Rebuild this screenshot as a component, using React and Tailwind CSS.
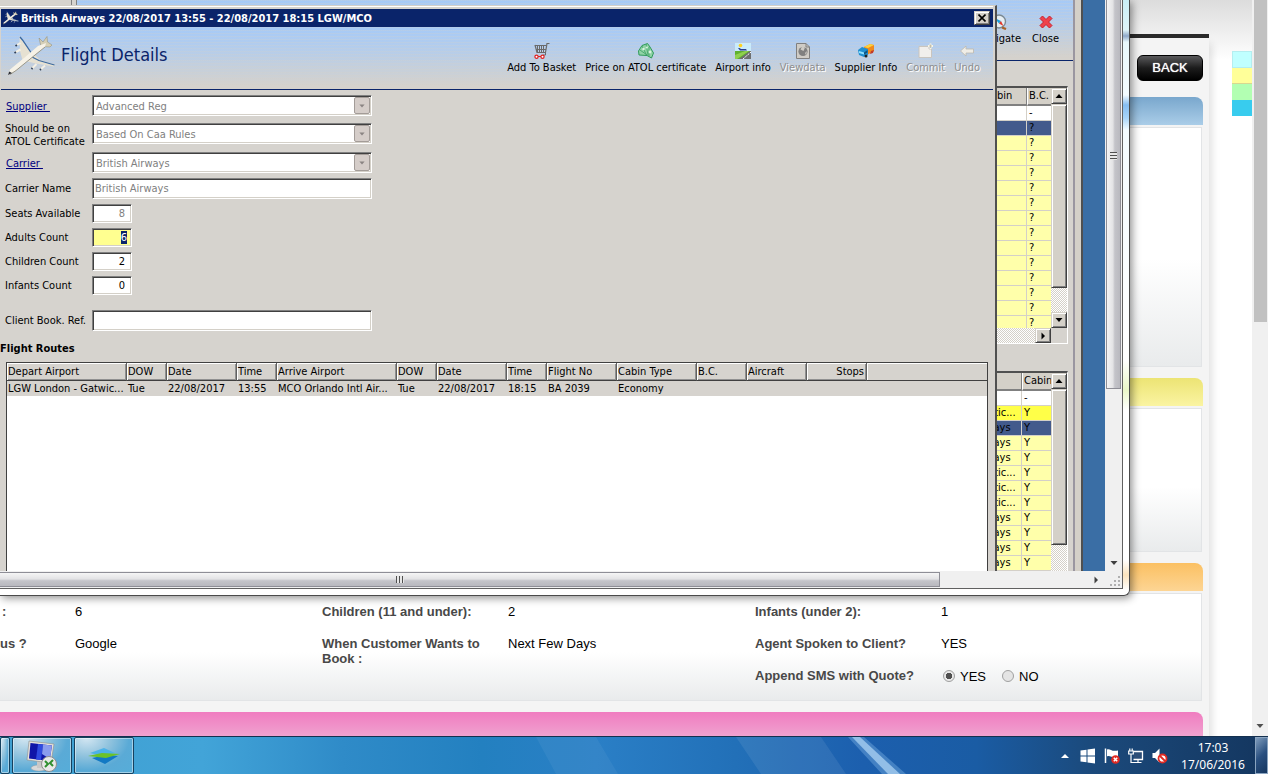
import React, { useState } from 'react';

const BEVEL_IN =
  "border border-t-[#808080] border-l-[#808080] border-r-white border-b-white shadow-[inset_1px_1px_0_#404040,inset_-1px_-1px_0_#d4d0c8]";
const BEVEL_OUT =
  "border border-t-[#d4d0c8] border-l-[#d4d0c8] border-r-[#404040] border-b-[#404040] shadow-[inset_1px_1px_0_#ffffff,inset_-1px_-1px_0_#808080]";
const DITHER = "bg-[repeating-conic-gradient(#ffffff_0_25%,#d4d0c8_0_50%)] bg-[length:2px_2px]";
const SKY =
  "bg-[repeating-linear-gradient(180deg,rgba(212,208,200,0.25)_0_1px,transparent_1px_3px),linear-gradient(180deg,#a6caf7_0%,#b4cdec_35%,#d5d2cd_95%)]";

const PlaneIcon = ({ className }) => (
  <svg viewBox="0 0 48 40" className={className}>
    {/* wings */}
    <path d="M11.500 0.500 L14 4 L24 18 L15 26 L12 15 Z" fill="#e6e1d2" />
    <path d="M12 1 L14.500 4 L24 18" fill="none" stroke="#3c6aa0" strokeWidth="1.300" />
    <path d="M26 18 L32 24 L46.500 28.500 L46 30.500 L28 27.500 L17 25 Z" fill="#e6e1d2" />
    <path d="M24 21 L31 24.500 L46.500 29" fill="none" stroke="#3c6aa0" strokeWidth="1.300" />
    {/* engines */}
    <path d="M8 9.500 L12.500 7 M7 16.500 L12.500 13.500 M24 32.500 L28.500 28 M32.500 33.500 L37 29.500" stroke="#f4f0e4" strokeWidth="2" />
    <path d="M7.500 10 L9 9 M6.500 17 L8 16 M23.500 33 L24.500 32 M32 34 L33 33" stroke="#2d3e58" strokeWidth="1.800" />
    {/* tail */}
    <path d="M31 2 L35 6 L39 0.500 L39.500 6 L44 9 L42 11 L33 10.500 Z" fill="#d5cfb6" stroke="#8d8872" strokeWidth="0.500" />
    {/* fuselage */}
    <path d="M0 39 L2 33.500 L16 22 L30 10 L38 7 L37 11 L27 19 L8 34.500 Z" fill="#f6f2e7" />
    <path d="M2 38.500 L8 34.500 L27 19 L37 11" fill="none" stroke="#9a9788" strokeWidth="1" />
    <path d="M0 39 L1.200 35.500 L4 37 Z" fill="#2c2e36" />
  </svg>
);

const BasketIcon = () => (
  <svg viewBox="0 0 16 16" className="size-4">
    <path d="M0.500 2.500 H12 M1 2 L3 9.500 H11.500 L13 0.500 H15.500 M2 6.500 H12" fill="none" stroke="#6a6a6a" strokeWidth="1.2" />
    <path d="M3.500 3 V9 M5.500 3 V9 M7.500 3 V9 M9.500 3 V9 M11.500 9 V12 H9" fill="none" stroke="#6a6a6a" />
    <circle cx="2.500" cy="13.800" r="1.600" fill="#fff" stroke="#e02020" strokeWidth="1.200" />
    <circle cx="8.500" cy="13.800" r="1.600" fill="#fff" stroke="#e02020" strokeWidth="1.200" />
    <path d="M4 13.500 H7" stroke="#e02020" />
  </svg>
);

const MoneyIcon = () => (
  <svg viewBox="0 0 16 16" className="size-4">
    <path d="M0.500 8 L4 2.500 L9.500 0.500 L12 4 L15.500 10 L13.500 15 L9 12.500 L1 12 Z" fill="#8fd3a6" stroke="#2f9a5a" />
    <path d="M4 3 L8.500 12 M8 1 L10 12 M2 7 L9 12 M11 4 L11 13" stroke="#3b9f63" strokeWidth="0.8" />
    <circle cx="5.500" cy="6" r="1.200" fill="#d8f3df" />
    <circle cx="12" cy="9" r="1.400" fill="#d8f3df" />
    <circle cx="8.800" cy="4.500" r="1.100" fill="#d8f3df" />
  </svg>
);

const AirportIcon = () => (
  <svg viewBox="0 0 16 16" className="size-4">
    <rect width="16" height="9" fill="#c9ebfb" />
    <rect y="8" width="16" height="8" fill="#5fb02f" />
    <path d="M4 16 L15 8 H16 V16 Z" fill="#6d6f70" />
    <path d="M0 12 L10 8 H14 L2 16 H0 Z" fill="#8fd04f" />
    <path d="M8 16 L16 9" stroke="#fff" strokeDasharray="2 1" />
    <circle cx="5.500" cy="2.500" r="1.800" fill="#ffd21f" />
    <path d="M3 5 L5 7.500 H12 L11 6 H6 L4.500 5 Z" fill="#2a3f8f" />
  </svg>
);

const ViewdataIcon = () => (
  <svg viewBox="0 0 16 16" className="size-4">
    <path d="M1.500 0.500 H11 L14.500 4 V15.500 H1.500 Z" fill="#cfccc6" stroke="#808080" />
    <path d="M11 0.500 V4 H14.500" fill="none" stroke="#808080" />
    <circle cx="8" cy="8.500" r="4.600" fill="#808080" />
    <path d="M7 3.500 L10 4.500 L8.500 8 L5.500 6.500 Z M10 10 L12 8 L11 12 Z" fill="#cfccc6" />
  </svg>
);

const TruckIcon = () => (
  <svg viewBox="0 0 16 16" className="size-4">
    <path d="M6 4 L12 1 L16 2 V8 L9 12 L6 8 Z" fill="#f08a1d" />
    <path d="M6 4 L12 1 L16 2 L10 5 Z" fill="#ffd23a" />
    <path d="M13 8 L16 7 L15 10 L12 11 Z" fill="#c0392b" />
    <path d="M0 7 L4 4 L10 6 V12 L6 14 L1 12 Z" fill="#1f8fd0" />
    <path d="M1 8 L6 9.500 V11.500 L1 10 Z" fill="#8ee0ff" />
    <path d="M6 9.500 L9.500 7 V9.500 L6 11.500 Z" fill="#12537f" />
    <circle cx="8" cy="13" r="1.500" fill="#222" />
  </svg>
);

const CommitIcon = () => (
  <svg viewBox="0 0 16 16" className="size-4">
    <path d="M1 3.500 H11 V6 H13.500 V14.500 H1 Z" fill="#f1efec" stroke="#c9c5bf" />
    <path d="M12.500 0.500 V6 M10 3 H15" stroke="#f7f5e8" strokeWidth="1.800" />
    <path d="M12.500 1.500 V5 M11 3 H14" stroke="#b5b19e" strokeWidth="0.700" />
  </svg>
);

const UndoIcon = () => (
  <svg viewBox="0 0 16 16" className="size-4">
    <path d="M1.500 8 L7 3 V6 H14.500 V10 H7 V13 Z" fill="#efede6" stroke="#bdb9af" strokeWidth="0.800" />
  </svg>
);

const CompassIcon = () => (
  <svg viewBox="0 0 16 16" className="size-4">
    <circle cx="8" cy="7.500" r="6.500" fill="#e6eef3" stroke="#7b8a94" strokeWidth="1.400" />
    <path d="M3.500 4 L10 7 L8 9.500 Z" fill="#1aa0dd" />
    <path d="M10 7 L12.500 12 L8 9.500 Z" fill="#e0382b" />
    <path d="M11 13.500 L15 15" stroke="#a8632a" strokeWidth="2.400" />
  </svg>
);

const CloseIcon = () => (
  <svg viewBox="0 0 16 16" className="size-4">
    <path d="M2 4.500 L4.500 2 L8 5.500 L11.500 2 L14 4.500 L10.500 8 L14 11.500 L11.500 14 L8 10.500 L4.500 14 L2 11.500 L5.500 8 Z" fill="#f0424c" stroke="#c81f2c" strokeLinejoin="round" />
  </svg>
);

const Arrow = ({ dir, className = "fill-black" }) => (
  <svg viewBox="0 0 8 8" className={`size-2 ${className}`}>
    {dir === "up" && <path d="M0.500 6 L4 2 L7.500 6 Z" />}
    {dir === "down" && <path d="M0.500 2 L4 6 L7.500 2 Z" />}
    {dir === "right" && <path d="M2.500 0.500 L6 4 L2.500 7.500 Z" />}
  </svg>
);

const toolbarItems = [
  { label: "Add To Basket", icon: BasketIcon },
  { label: "Price on ATOL certificate", icon: MoneyIcon },
  { label: "Airport info", icon: AirportIcon },
  { label: "Viewdata", icon: ViewdataIcon, disabled: true },
  { label: "Supplier Info", icon: TruckIcon },
  { label: "Commit", icon: CommitIcon, disabled: true },
  { label: "Undo", icon: UndoIcon, disabled: true },
];

const routeColumns = [
  { title: "Depart Airport", width: "w-[120px]", value: "LGW London - Gatwic..." },
  { title: "DOW", width: "w-[40px]", value: "Tue" },
  { title: "Date", width: "w-[70px]", value: "22/08/2017" },
  { title: "Time", width: "w-[40px]", value: "13:55" },
  { title: "Arrive Airport", width: "w-[120px]", value: "MCO Orlando Intl Air..." },
  { title: "DOW", width: "w-[40px]", value: "Tue" },
  { title: "Date", width: "w-[70px]", value: "22/08/2017" },
  { title: "Time", width: "w-[40px]", value: "18:15" },
  { title: "Flight No", width: "w-[70px]", value: "BA 2039" },
  { title: "Cabin Type", width: "w-[80px]", value: "Economy" },
  { title: "B.C.", width: "w-[50px]", value: "" },
  { title: "Aircraft", width: "w-[60px]", value: "" },
  { title: "Stops", width: "w-[60px]", value: "", right: true },
  { title: "", width: "", value: "" },
];

const fareRows = [
  { left: "", right: "-", tone: "bg-white" },
  { left: "", right: "?", tone: "bg-[#435a8c]" },
  ...Array.from({ length: 13 }, () => ({ left: "", right: "?", tone: "bg-[#ffffaa]" })),
];

const carrierRows = [
  { left: "", right: "-", tone: "bg-white" },
  { left: "Virgin Atlantic...", right: "Y", tone: "bg-[#ffff48]" },
  { left: "British Airways", right: "Y", tone: "bg-[#435a8c]" },
  { left: "British Airways", right: "Y", tone: "bg-[#ffffaa]" },
  { left: "British Airways", right: "Y", tone: "bg-[#ffffaa]" },
  { left: "Virgin Atlantic...", right: "Y", tone: "bg-[#ffffaa]" },
  { left: "Virgin Atlantic...", right: "Y", tone: "bg-[#ffffaa]" },
  { left: "Virgin Atlantic...", right: "Y", tone: "bg-[#ffffaa]" },
  { left: "British Airways", right: "Y", tone: "bg-[#ffffaa]" },
  { left: "British Airways", right: "Y", tone: "bg-[#ffffaa]" },
  { left: "British Airways", right: "Y", tone: "bg-[#ffffaa]" },
  { left: "British Airways", right: "Y", tone: "bg-[#ffffaa]" },
];

const ToolButton = ({ label, icon: Icon, disabled }) => (
  <button
    disabled={disabled}
    className={`flex flex-col items-center gap-px whitespace-nowrap leading-4 ${
      disabled ? "text-[#8e8e8e] [text-shadow:1px_1px_0_#ffffff]" : "text-black"
    }`}
  >
    <Icon />
    {label}
  </button>
);

const GridTable = ({ headers, rows, width, firstCol, secondCol }) => (
  <table className={`table-fixed border-separate border-spacing-0 ${width}`}>
    <colgroup>
      <col className={firstCol} />
      <col className={secondCol} />
    </colgroup>
    <thead>
      <tr className="h-[18px] bg-[#d4d0c8] text-left">
        {headers.map((h, i) => (
          <th key={i} className="overflow-hidden whitespace-nowrap border-b-2 border-l border-r border-b-[#808080] border-l-white border-r-[#808080] p-0 pl-px font-normal leading-4 last:border-r-0">
            {h}
          </th>
        ))}
      </tr>
    </thead>
    <tbody>
      {rows.map((row, i) => (
        <tr key={i} className={`h-[15px] ${row.tone}`}>
          <td className="overflow-hidden whitespace-nowrap border-b border-r border-[#d4d0c8] p-0 leading-[14px]">{row.left}</td>
          <td className="overflow-hidden whitespace-nowrap border-b border-[#d4d0c8] p-0 pl-0.5 leading-[14px]">{row.right}</td>
        </tr>
      ))}
    </tbody>
  </table>
);

const TextField = ({ id, label, value, onChange, small, disabled, className = "" }) => (
  <div className={`flex items-center ${small ? "h-[19px]" : "h-[21px]"} ${className}`}>
    <label htmlFor={id} className="w-[87px] shrink-0 whitespace-nowrap pt-0.5">{label}</label>
    <input
      id={id}
      value={value}
      disabled={disabled}
      onChange={(e) => onChange && onChange(e.target.value)}
      readOnly={!onChange}
      className={`h-full bg-white outline-none ${BEVEL_IN} ${small ? "w-10 pr-1.5 text-right" : "w-[280px] px-0.5"} ${
        disabled ? "text-[#808080]" : "text-black"
      }`}
    />
  </div>
);

const SelectField = ({ id, label, value, link, className = "" }) => (
  <div className={`flex h-[21px] items-center ${className}`}>
    <label htmlFor={id} className="w-[87px] shrink-0 whitespace-pre pt-0.5 leading-[13px]">
      {link ? <a href="#" className="pl-px text-[#000080] underline">{label}</a> : label}
    </label>
    <div className={`flex h-full w-[280px] items-stretch bg-white p-px ${BEVEL_IN}`}>
      <select id={id} disabled className="flex-1 appearance-none bg-transparent pl-0.5 pt-0.5 text-[#808080] opacity-100">
        <option>{value}</option>
      </select>
      <span className="flex w-4 items-center justify-center rounded-[2px] border border-[#a39c98] bg-[#d5cdc9]">
        <Arrow dir="down" className="scale-75 fill-[#8a8482]" />
      </span>
    </div>
  </div>
);

const FlightDetails = () => {
  const [children, setChildren] = useState("2");
  const [infants, setInfants] = useState("0");
  const [bookRef, setBookRef] = useState("");

  return (
    <section className="absolute bottom-0 left-0 right-[108px] top-[5px] flex flex-col border-r-2 border-t border-r-[#505050] border-t-[#d4d0c8] bg-[#d6d3ce] pr-[2px] text-black">
      {/* Title bar */}
      <div className="h-[3px] shrink-0 border-t border-white" />
      <header className="ml-px flex h-[18px] shrink-0 items-center bg-[#0a246a] pl-0.5 pr-[3px] text-white">
        <PlaneIcon className="size-4" />
        <h1 className="flex-1 pl-0.5 pt-0.5 text-[11px] font-bold">British Airways 22/08/2017 13:55 - 22/08/2017 18:15 LGW/MCO</h1>
        <button aria-label="Close window" className={`flex h-3.5 w-4 items-center justify-center bg-[#d4d0c8] ${BEVEL_OUT}`}>
          <svg viewBox="0 0 8 8" className="size-2 stroke-black stroke-[1.6]">
            <path d="M0.500 0.500 L7.500 7.500 M7.500 0.500 L0.500 7.500" />
          </svg>
        </button>
      </header>

      {/* Toolbar */}
      <div className={`ml-px flex h-[63px] shrink-0 items-start border-b border-[#0a246a] pr-[13px] ${SKY}`}>
        <PlaneIcon className="ml-[7px] mt-[9px] h-10 w-12" />
        <h2 className="flex-1 pl-[5px] pt-4 text-[18px] leading-6 text-[#0a246a]">Flight Details</h2>
        <nav className="flex gap-[9px] pt-4">
          {toolbarItems.map((item) => (
            <ToolButton key={item.label} {...item} />
          ))}
        </nav>
      </div>

      {/* Form */}
      <form className="flex shrink-0 flex-col gap-[5px] pl-[5px] pt-[5px]">
        <SelectField id="supplier" label="Supplier " value="Advanced Reg" link />
        <SelectField id="atol" label={"Should be on\nATOL Certificate"} value="Based On Caa Rules" className="mt-0.5" />
        <SelectField id="carrier" label="Carrier " value="British Airways" link className="mt-[3px]" />
        <TextField id="carrierName" label="Carrier Name" value="British Airways" disabled />
        <TextField id="seats" label="Seats Available" value="8" small disabled />
        {/* the focused count is shown with its digit selected */}
        <div className="flex h-[19px] items-center">
          <label htmlFor="adults" className="w-[87px] shrink-0 pt-0.5">Adults Count</label>
          <input
            id="adults"
            defaultValue="6"
            autoFocus
            onFocus={(e) => e.target.select()}
            className={`h-full w-10 bg-[#ffff90] pr-1 text-right outline-none selection:bg-[#0a246a] selection:text-white ${BEVEL_IN}`}
          />
        </div>
        <TextField id="children" label="Children Count" value={children} onChange={setChildren} small />
        <TextField id="infants" label="Infants Count" value={infants} onChange={setInfants} small />
        <TextField id="bookRef" label="Client Book. Ref." value={bookRef} onChange={setBookRef} className="mt-[10px]" />
      </form>

      {/* Routes */}
      <h3 className="mt-[10px] shrink-0 font-bold leading-4">Flight Routes</h3>
      <div className="ml-1.5 mr-[5px] mt-[5px] min-h-0 flex-1 border-x border-t border-[#404040] bg-white">
        <table className="w-full table-fixed border-separate border-spacing-0">
          <colgroup>
            {routeColumns.map((c, i) => (
              <col key={i} className={c.width} />
            ))}
          </colgroup>
          <thead>
            <tr className="h-[18px] bg-[#d6d3ce]">
              {routeColumns.map((c, i) => (
                <th
                  key={i}
                  className={`whitespace-nowrap border-b border-r border-b-[#404040] border-r-[#606060] p-0 px-px font-normal leading-4 shadow-[inset_1px_1px_0_#ffffff,inset_-1px_-1px_0_#909090] last:border-r-0 last:shadow-[inset_1px_1px_0_#ffffff] ${
                    c.right ? "pr-0.5 text-right" : "text-left"
                  }`}
                >
                  {c.title}
                </th>
              ))}
            </tr>
          </thead>
          <tbody>
            <tr className="h-[15px] bg-[#d6d3ce]">
              {routeColumns.map((c, i) => (
                <td key={i} className="whitespace-nowrap p-0 pl-px leading-[15px]">{c.value}</td>
              ))}
            </tr>
          </tbody>
        </table>
      </div>
    </section>
  );
};

const BackOffice = () => (
  <div className="flex min-w-0 flex-1 bg-[#d6d3ce] text-black">
    <div className="flex min-w-0 flex-1 flex-col">
      <div className="flex h-[61px] shrink-0">
        <div className="w-[72px] border-r border-[#808080]" />
        <div className="w-[5px] border-r border-[#808080]" />
        <div className={`flex flex-1 items-start justify-end gap-[11px] border-b border-[#0a246a] pr-[14px] pt-3.5 ${SKY}`}>
          <ToolButton label="Navigate" icon={CompassIcon} />
          <ToolButton label="Close" icon={CloseIcon} />
        </div>
      </div>

      {/* Fares */}
      <div className="mr-[5px] mt-[25px] flex h-[258px] shrink-0 border-b border-r border-t-2 border-b-white border-r-white border-t-[#505050]">
        <div className="flex min-w-0 flex-1 flex-col bg-white">
          <div className="flex h-[240px] justify-end overflow-hidden">
            <GridTable headers={["Cabin", "B.C."]} rows={fareRows} width="w-[69px]" firstCol="w-[45px]" secondCol="w-[24px]" />
          </div>
          <div className={`flex flex-1 justify-end ${DITHER}`}>
            <button aria-label="Scroll right" className={`flex w-4 items-center justify-center bg-[#d4d0c8] ${BEVEL_OUT}`}><Arrow dir="right" /></button>
          </div>
        </div>
        <div className="flex w-4 flex-col">
          <button aria-label="Scroll up" className={`flex h-4 items-center justify-center bg-[#d4d0c8] ${BEVEL_OUT}`}><Arrow dir="up" /></button>
          <div className={`h-[184px] bg-[#d4d0c8] ${BEVEL_OUT}`} />
          <div className={`h-[24px] ${DITHER}`} />
          <button aria-label="Scroll down" className={`flex h-4 items-center justify-center bg-[#d4d0c8] ${BEVEL_OUT}`}><Arrow dir="down" /></button>
        </div>
      </div>

      {/* Carriers */}
      <div className="mr-[5px] mt-[27px] flex min-h-0 flex-1 border-r border-t-2 border-r-white border-t-[#505050]">
        <div className="flex min-w-0 flex-1 justify-end overflow-hidden bg-white">
          <GridTable headers={["", "Cabin"]} rows={carrierRows} width="w-[114px]" firstCol="w-[85px]" secondCol="w-[29px]" />
        </div>
        <div className="flex w-4 flex-col">
          <button aria-label="Scroll up" className={`flex h-4 items-center justify-center bg-[#d4d0c8] ${BEVEL_OUT}`}><Arrow dir="up" /></button>
          <div className={`h-[156px] bg-[#d4d0c8] ${BEVEL_OUT}`} />
          <div className={`flex-1 ${DITHER}`} />
        </div>
      </div>
    </div>
    <div className="w-2.5 border-l-2 border-r-2 border-l-[#9a96a0] border-r-[#505050] bg-[#d4d0c8]" />
  </div>
);

const RemoteWindow = () => (
  <div className="absolute bottom-[140px] left-0 right-[138px] top-0 flex rounded-br-md border-b border-r border-[#4a4a4a] bg-[linear-gradient(180deg,#c9eef6_0,#dff4f8_30px,#8fa8c8_36px,#e8f8fb_42px,#f4fcff_95px,#86bdf0_105px,#a8d4f8_118px,#f4fcff_130px,#ffffff_360px,#eaf7c8_390px,#ffffff_410px,#ffffff_560px,#fbe3bd_575px,#ffffff_590px)] pb-1.5 pr-1.5 shadow-[2px_2px_8px_rgba(0,0,0,0.45)]">
    <div className="flex min-w-0 flex-1 flex-col border-b border-r border-[#606060] bg-[#f0f0f0] font-['DejaVu_Sans_Condensed','Liberation_Sans',sans-serif] text-[11px]">
      <div className="flex min-h-0 flex-1">
        <div className="relative flex min-w-0 flex-1 overflow-hidden">
          <BackOffice />
          <div className="w-[22px] bg-[#3a6ea5]" />
          <FlightDetails />
        </div>
        <div className="flex w-[17px] flex-col items-center">
          <div className="flex h-[389px] w-[15px] flex-col items-center border border-t-0 border-[#8e8e96] bg-[linear-gradient(90deg,#f5f5f5_0%,#e3e3e5_45%,#c4c4c9_60%,#b9b9bf_100%)] pt-[152px]">
            <div className="h-2 w-[7px] bg-[repeating-linear-gradient(180deg,#505050_0_1px,#e8e8e8_1px_3px)]" />
          </div>
          <div className="flex flex-1 items-end pb-1"><Arrow dir="down" className="fill-[#404040]" /></div>
        </div>
      </div>
      <div className="flex h-[17px] items-center">
        <div className="flex h-[15px] w-[85%] max-w-[940px] items-center justify-end border border-l-0 border-[#8e8e96] bg-[linear-gradient(180deg,#f5f5f5_0%,#e3e3e5_45%,#c4c4c9_60%,#b9b9bf_100%)]">
          <div className="mr-[57%] h-[7px] w-2 bg-[repeating-linear-gradient(90deg,#505050_0_1px,#e8e8e8_1px_3px)]" />
        </div>
        <div className="flex flex-1 justify-end pr-[5px]"><Arrow dir="right" className="fill-[#404040]" /></div>
        <svg viewBox="0 0 17 17" className="size-[17px] fill-[#b0b0b0]">
          <path d="M13 5h2v2h-2z M9 9h2v2h-2z M13 9h2v2h-2z M5 13h2v2h-2z M9 13h2v2h-2z M13 13h2v2h-2z" />
        </svg>
      </div>
    </div>
  </div>
);

const Panel = ({ tone, height, children }) => (
  <>
    <div className={`h-7 shrink-0 rounded-tr-lg ${tone}`} />
    <div className={`mb-[11px] mr-px mt-0.5 shrink-0 border-y border-r border-[#e2e4e6] bg-[linear-gradient(180deg,#ffffff_0%,#ffffff_55%,#e9ebec_100%)] ${height}`}>
      {children}
    </div>
  </>
);

const QuotePage = () => {
  const [sms, setSms] = useState("YES");

  return (
    <main className="flex h-full bg-[linear-gradient(180deg,#dcdcdc_0,#ffffff_60px)]">
      <div className="flex min-w-0 flex-1 flex-col pt-[34px]">
        <div className="flex min-h-0 flex-1 flex-col border-t-4 border-[#2a2a2a] bg-[#f4f4f4] shadow-[3px_10px_8px_rgba(0,0,0,0.12)]">
          <div className="flex h-[59px] shrink-0 items-start justify-end pr-1.5 pt-[17px]">
            <button className="h-[26px] w-[66px] rounded-md border border-black bg-[linear-gradient(180deg,#5a5a5c_0%,#1c1c1c_50%,#000000_100%)] text-[13px] text-white [text-shadow:0_0_1px_#ffffff]">
              BACK
            </button>
          </div>
          <div className="flex min-h-0 flex-1 flex-col overflow-hidden pr-1.5">
            <Panel tone="bg-[linear-gradient(180deg,#79a7cd,#aacde8)]" height="h-[240px]" />
            <Panel tone="bg-[linear-gradient(180deg,#ece474,#faf4a2)]" height="h-[144px]" />
            <Panel tone="bg-[linear-gradient(180deg,#fbc062,#fdd594)]" height="h-[108px]">
              <div className="grid grid-cols-[75px_247fr_186px_247fr_186px_260fr] grid-rows-[32px_32px_16px] pt-[10px] text-[13px] leading-[15px] text-black">
                <b className="pl-0.5 text-[#484848]">:</b>
                <span>6</span>
                <b className="text-[#484848]">Children (11 and under):</b>
                <span>2</span>
                <b className="text-[#484848]">Infants (under 2):</b>
                <span>1</span>
                <b className="text-[#484848]">us ?</b>
                <span>Google</span>
                <b className="pr-4 text-[#484848]">When Customer Wants to Book :</b>
                <span>Next Few Days</span>
                <b className="text-[#484848]">Agent Spoken to Client?</b>
                <span>YES</span>
                <b className="col-start-5 text-[#484848]">Append SMS with Quote?</b>
                <div className="flex items-center gap-4 pl-0.5">
                  {["YES", "NO"].map((opt) => (
                    <label key={opt} className="flex items-center gap-[5px]">
                      <input
                        type="radio"
                        name="sms"
                        checked={sms === opt}
                        onChange={() => setSms(opt)}
                        className="size-3 appearance-none rounded-full border border-[#a0a0a0] bg-[#e4e4e4] checked:bg-[radial-gradient(#505050_0_3px,#e8e8e8_3px)]"
                      />
                      {opt}
                    </label>
                  ))}
                </div>
              </div>
            </Panel>
            <Panel tone="bg-[linear-gradient(180deg,#f07cc0,#f0a8d2)]" height="h-[108px]" />
          </div>
        </div>
      </div>
      <aside className="flex w-[43px] flex-col items-end pt-[51px]">
        <div className="h-[17px] w-5 border border-[#b4eef0] bg-[#c0ffff]" />
        <div className="h-4 w-5 border-b border-[#d8d890] bg-[#ffff99]" />
        <div className="h-4 w-5 bg-[#b2ffb2]" />
        <div className="h-4 w-5 bg-[#38ccee]" />
      </aside>
      <div className="flex w-4 flex-col items-center justify-between bg-[#f0f0f0]">
        <div className="h-[322px] w-[13px] bg-[#c1c1c1]" />
        <div className="pb-1.5"><Arrow dir="down" className="fill-[#505050]" /></div>
      </div>
    </main>
  );
};

const TASK =
  "flex items-center justify-center rounded-[2px] border border-[#16415f] bg-[radial-gradient(ellipse_at_20%_0%,#d3e6f2_0%,#93c4de_35%,#5aaad6_65%,#56add9_100%)] shadow-[inset_0_0_0_1px_rgba(255,255,255,0.45)]";

const Taskbar = () => (
  <footer className="flex h-[38px] shrink-0 items-stretch border-t border-[#14304f] bg-[linear-gradient(90deg,#3f9fd0_0%,#42a4d8_16%,#2f8bc8_27%,#2380c0_38%,#2a7fc6_47%,#2270b8_58%,#1c5fae_68%,#1a5ca4_77%,#1b4a7c_86%,#14365f_100%)] font-['Noto_Sans','Open_Sans',sans-serif]">
    <button aria-label="Window" className={`w-2.5 ${TASK}`} />
    <button aria-label="Remote Desktop" className={`ml-0.5 w-[60px] ${TASK}`}>
      <svg viewBox="0 0 32 32" className="size-8">
        <ellipse cx="13" cy="28" rx="8" ry="3" fill="#d8d8d8" stroke="#a0a0a0" strokeWidth="0.500" />
        <path d="M11 20 H17 V28 H11 Z" fill="#c8c8c8" />
        <path d="M3 1 L28 4 L25 23 L1 20 Z" fill="#e4e2dc" stroke="#8c8c8c" strokeWidth="0.600" />
        <path d="M4.500 3 L26 5.500 L23.500 21 L3 18.500 Z" fill="#1016a8" />
        <path d="M12 4 L17 4.500 L15 20 L10 19.500 Z" fill="#2f4be0" />
        <path d="M17 4.500 L26 5.500 L24 19 L16 14 Z" fill="#8a9cee" />
        <circle cx="23" cy="24" r="7.500" fill="#e8e8e8" stroke="#909090" />
        <path d="M19 21 L22 24 L19 27 M27 20 L24 23 L27 26" fill="none" stroke="#2f8f2f" strokeWidth="2" />
      </svg>
    </button>
    <button aria-label="Travel app" className={`ml-0.5 w-[60px] ${TASK}`}>
      <svg viewBox="0 0 32 16" className="h-4 w-8">
        <path d="M2 5 L16 0 L27 5 L14 8 Z" fill="#4db2e8" />
        <path d="M4 10 L18 7 L30 8 L17 16 Z" fill="#1279c4" />
        <path d="M0 8 L14 5 L32 6 L18 10 Z" fill="#6cc229" />
      </svg>
    </button>
    <div className="flex flex-1 justify-end pr-[125px]">
      <svg viewBox="0 0 400 37" preserveAspectRatio="none" className="h-full w-[400px]">
        <path d="M0 0 H60 L82 37 H20 Z" fill="#ffffff" opacity="0.050" />
        <path d="M200 0 H285 L310 37 H225 Z" fill="#ffffff" opacity="0.080" />
        <path d="M312 0 H328 L370 37 H346 Z" fill="#8fc4ee" opacity="0.350" />
        <path d="M316 0 H324 L364 37 H352 Z" fill="#b4d8f6" opacity="0.700" />
      </svg>
    </div>
    <div className="flex items-center gap-2 pr-[11px] text-white">
      <svg viewBox="0 0 8 8" className="mr-[3px] size-2 fill-white"><path d="M0 6 L4 2 L8 6 Z" /></svg>
      <svg viewBox="0 0 16 16" className="size-4 fill-white">
        <path d="M0.500 2.500 L6.500 1.700 V7.500 H0.500 Z M7.500 1.500 L15 0.500 V7.500 H7.500 Z M0.500 8.500 H6.500 V14.300 L0.500 13.500 Z M7.500 8.500 H15 V15.500 L7.500 14.500 Z" />
      </svg>
      <svg viewBox="0 0 16 16" className="size-4">
        <path d="M1.500 0.500 V15" stroke="#fff" strokeWidth="1.500" />
        <path d="M3 1.500 C6 0 7 4 14 2.500 V9 C8 10.500 6 7 3 8.500 Z" fill="#fff" />
        <circle cx="11.500" cy="11.500" r="4.300" fill="#e02a22" />
        <path d="M9.800 9.800 L13.200 13.200 M13.200 9.800 L9.800 13.200" stroke="#fff" strokeWidth="1.500" />
      </svg>
      <svg viewBox="0 0 16 16" className="size-4">
        <path d="M5.500 3.500 H14.500 V11.500 H5.500" fill="#2d4f78" stroke="#fff" strokeWidth="1.300" />
        <path d="M0.700 3 H5.300 V6 H0.700 Z M1.800 0.500 V3 M4.200 0.500 V3 M3 6 V14.500 H8 M10 12 V14.500 M6.500 14.500 H13.500" fill="none" stroke="#fff" strokeWidth="1.200" />
      </svg>
      <svg viewBox="0 0 16 16" className="size-4">
        <path d="M0.500 5 H3 L7.500 0.500 V14.500 L3 10 H0.500 Z" fill="#fff" />
        <circle cx="10.500" cy="10.500" r="4" fill="#fff" stroke="#e02a22" strokeWidth="1.800" />
        <path d="M8 8 L13 13" stroke="#e02a22" strokeWidth="1.800" />
      </svg>
      <div className="ml-1.5 flex w-[62px] flex-col items-center whitespace-nowrap text-[12px] leading-[17px]">
        <div>17:03</div>
        <div>17/06/2016</div>
      </div>
    </div>
    <button aria-label="Show desktop" className="w-[13px] border border-[#8aa4c0] bg-[linear-gradient(135deg,#7f9cbc_0%,#2a5080_50%,#16365f_100%)]" />
  </footer>
);

const App = () => (
  <div className="flex h-screen flex-col overflow-hidden font-['Liberation_Sans',Arial,sans-serif]">
    <div className="relative min-h-0 flex-1 overflow-hidden">
      <QuotePage />
      <RemoteWindow />
    </div>
    <Taskbar />
  </div>
);

export default App;
